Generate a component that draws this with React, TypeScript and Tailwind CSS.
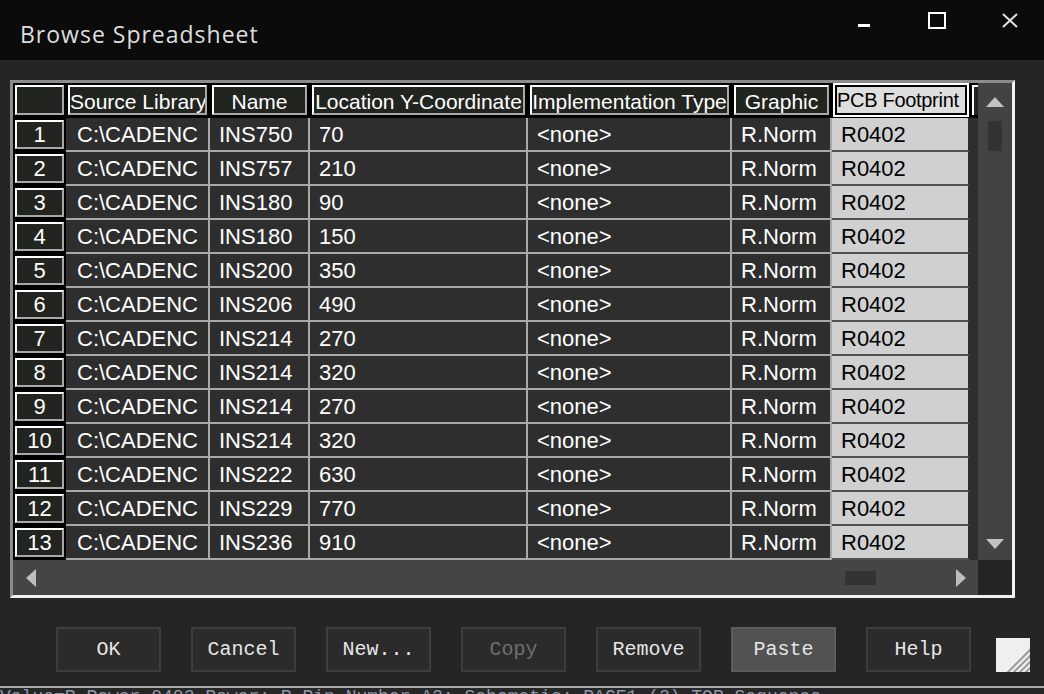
import React from "react";

const rows: [string, string][] = [
  ["INS750", "70"],
  ["INS757", "210"],
  ["INS180", "90"],
  ["INS180", "150"],
  ["INS200", "350"],
  ["INS206", "490"],
  ["INS214", "270"],
  ["INS214", "320"],
  ["INS214", "270"],
  ["INS214", "320"],
  ["INS222", "630"],
  ["INS229", "770"],
  ["INS236", "910"],
];

const headFill =
  "h-full border-2 border-t-white border-l-white border-r-[#a8a8a8] border-b-[#a8a8a8] bg-[#222420] text-white";

const HeadCell = ({ label }: { label: string }) => (
  <div className="bg-black pl-[2px] pr-[3px] pt-[2px] pb-[3px]">
    <div
      className={`${headFill} overflow-hidden whitespace-nowrap pt-[3px] text-center text-[21px] leading-[24px]`}
    >
      {label}
    </div>
  </div>
);

const DataCell = ({ text, pad = "pl-[9px]" }: { text: string; pad?: string }) => (
  <div
    className={`overflow-hidden whitespace-nowrap border-r-2 border-b-2 border-[#a9a9a9] bg-[#2e2e2e] pt-[2px] text-[22px] leading-[30px] text-white ${pad}`}
  >
    {text}
  </div>
);

const Arrow = ({ dir }: { dir: "up" | "down" | "left" | "right" }) => {
  if (dir === "up" || dir === "down") {
    const pts = dir === "up" ? "9,0 18,10 0,10" : "0,0 18,0 9,10";
    return (
      <svg width="18" height="10" viewBox="0 0 18 10">
        <polygon points={pts} fill="#c2c2c2" />
      </svg>
    );
  }
  const pts = dir === "left" ? "0,9 10,0 10,18" : "0,0 10,9 0,18";
  return (
    <svg width="10" height="18" viewBox="0 0 10 18">
      <polygon points={pts} fill="#bdbdbd" />
    </svg>
  );
};

const Button = ({
  label,
  disabled,
  active,
}: {
  label: string;
  disabled?: boolean;
  active?: boolean;
}) => (
  <div
    className={`flex h-[45px] w-[105px] items-center justify-center border-2 font-['Liberation_Mono',monospace] text-[20px] ${
      active ? "border-[#5c5c5c] bg-[#525252]" : "border-[#3d3d3d] bg-[#2b2b2b]"
    } ${disabled ? "text-[#6f6f6f]" : "text-[#e6e6e6]"}`}
  >
    {label}
  </div>
);

const SizeGrip = () => (
  <svg width="34" height="34" viewBox="0 0 34 34">
    <rect width="34" height="34" fill="#efefef" />
    <g stroke="#9c9c9c" strokeWidth="2">
      <line x1="35" y1="11" x2="11" y2="35" />
      <line x1="35" y1="17" x2="17" y2="35" />
      <line x1="35" y1="23" x2="23" y2="35" />
      <line x1="35" y1="29" x2="29" y2="35" />
    </g>
  </svg>
);

export default function App() {
  return (
    <div className="flex h-[694px] w-[1044px] flex-col overflow-hidden bg-[#252525] font-['Liberation_Sans',Arial,sans-serif]">
      {/* title bar */}
      <div className="flex h-[60px] shrink-0 items-start bg-[#0b0b0b] pl-[20px] pr-[26px]">
        <span className="mt-[19px] font-['Open_Sans',sans-serif] text-[23px] leading-[31px] tracking-[1px] text-[#dedede]">
          Browse Spreadsheet
        </span>
        <div className="ml-auto mt-[24px] h-[3px] w-[12px] bg-white" />
        <div className="ml-[58px] mt-[12px] h-[17px] w-[18px] border-2 border-white" />
        <svg className="ml-[56px] mt-[13px]" width="16" height="15" viewBox="0 0 16 15">
          <g stroke="#e2e2e2" strokeWidth="2">
            <line x1="1" y1="1" x2="15" y2="14" />
            <line x1="15" y1="1" x2="1" y2="14" />
          </g>
        </svg>
      </div>

      <div className="flex flex-col px-[10px] pt-[20px]">
        {/* spreadsheet frame */}
        <div className="h-[518px] w-[1005px] border-[3px] border-t-[#8c8c8c] border-l-[#8c8c8c] border-r-[#f2f2f2] border-b-[#f2f2f2]">
          <div className="grid h-full grid-cols-[965px_34px] grid-rows-[477px_35px]">
            <div className="grid grid-cols-[53px_144px_100px_218px_204px_100px_138px_8px] grid-rows-[35px_repeat(13,34px)] overflow-hidden bg-black">
              <div className="bg-black px-[2px] pt-[2px] pb-[3px]">
                <div className={headFill} />
              </div>
              <HeadCell label="Source Library" />
              <HeadCell label="Name" />
              <HeadCell label="Location Y-Coordinate" />
              <HeadCell label="Implementation Type" />
              <HeadCell label="Graphic" />
              <div className="bg-black px-[1px] pb-[1px]">
                <div className="h-full border-2 border-white">
                  <div className="h-full overflow-hidden whitespace-nowrap border-2 border-black bg-[#dedede] pt-[1px] text-[20px] leading-[24px] tracking-[-0.3px] text-black">
                    PCB Footprint
                  </div>
                </div>
              </div>
              <div className="overflow-hidden bg-black pl-[2px] pt-[2px] pb-[3px]">
                <div className="h-full w-[20px] border-t-2 border-l-2 border-white bg-[#222420]" />
              </div>

              {rows.map(([name, y], i) => (
                <React.Fragment key={i}>
                  <div className="bg-black px-[2px] pt-[2px] pb-[3px]">
                    <div className={`${headFill} pt-[1px] text-center text-[22px] leading-[23px]`}>
                      {i + 1}
                    </div>
                  </div>
                  <DataCell text="C:\CADENC" pad="pl-[11px]" />
                  <DataCell text={name} />
                  <DataCell text={y} />
                  <DataCell text="<none>" />
                  <DataCell text="R.Norm" />
                  <div className="overflow-hidden whitespace-nowrap border-r-2 border-b-2 border-r-[#2e2e2e] border-b-[#505050] bg-[#d0d0d0] pl-[9px] pt-[2px] text-[22px] leading-[30px] text-black">
                    R0402
                  </div>
                  <div className="bg-[#2e2e2e]" />
                </React.Fragment>
              ))}
            </div>

            {/* vertical scrollbar */}
            <div className="flex flex-col items-center bg-[#434343]">
              <div className="mt-[14px] flex">
                <Arrow dir="up" />
              </div>
              <div className="mt-[14px] h-[30px] w-[14px] bg-[#333333]" />
              <div className="mt-auto mb-[11px] flex">
                <Arrow dir="down" />
              </div>
            </div>

            {/* horizontal scrollbar */}
            <div className="flex items-center bg-[#454545]">
              <div className="ml-[13px] flex">
                <Arrow dir="left" />
              </div>
              <div className="ml-[809px] h-[14px] w-[31px] bg-[#333333]" />
              <div className="ml-[80px] flex">
                <Arrow dir="right" />
              </div>
            </div>
            <div className="bg-[#252525]" />
          </div>
        </div>

        {/* buttons */}
        <div className="mt-[29px] flex items-end pl-[46px]">
          <div className="flex gap-[30px]">
            <Button label="OK" />
            <Button label="Cancel" />
            <Button label="New..." />
            <Button label="Copy" disabled />
            <Button label="Remove" />
            <Button label="Paste" active />
            <Button label="Help" />
          </div>
          <div className="ml-[25px] flex">
            <SizeGrip />
          </div>
        </div>
      </div>

      {/* window behind, peeking out */}
      <div className="mt-[14px] h-[2px] shrink-0 bg-[#a9a9a9]" />
      <div className="h-[6px] shrink-0 overflow-hidden bg-[#262626]">
        <div className="whitespace-nowrap font-['Liberation_Mono',monospace] text-[18px] leading-[18px] text-[#8a98ad]">
          Value=R_Power-0402_Power: R_Pin Number A2: Schematic: PAGE1 (2) TOP Sequence
        </div>
      </div>
    </div>
  );
}
